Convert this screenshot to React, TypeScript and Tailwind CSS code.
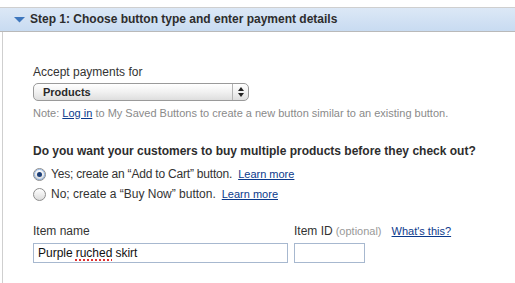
const Radio: React.FC<{ checked?: boolean }> = ({ checked }) => {
  return (
    <span className="relative flex items-center justify-center w-[13px] h-[13px] rounded-full border border-[#8d8d8d] bg-gradient-to-b from-[#ffffff] to-[#dcdcdc] shrink-0">
      {checked && (
        <span className="w-[5px] h-[5px] rounded-full bg-[#1d3f77]" />
      )}
      {checked && (
        <span className="absolute inset-0 rounded-full border border-[#5a8fd6] opacity-60" />
      )}
    </span>
  )
}

const LearnMore: React.FC = () => (
  <a className="ml-[6px] text-[11px] tracking-normal text-[#0b3a8c] underline underline-offset-1">
    Learn more
  </a>
)

export default function App() {
  return (
    <div
      className="w-[515px] h-[283px] overflow-hidden bg-white pt-[7px] text-[#333]"
      style={{ fontFamily: '"Liberation Sans", Arial, sans-serif' }}
    >
      {/* step header */}
      <div className="h-[25px] border-t border-b border-t-[#cfcfcf] border-b-[#b9b9b9] bg-gradient-to-b from-[#dce8f6] to-[#c8dbf1] flex items-center">
        <svg width="12" height="6" viewBox="0 0 12 6" className="ml-[14px] mr-[4px] mt-[1px]">
          <polygon points="0,0 11,0 5.5,5.5" fill="#3e77bd" />
        </svg>
        <span className="text-[12px] font-bold leading-[15px] text-[#2d2d2d]">
          Step 1: Choose button type and enter payment details
        </span>
      </div>

      {/* body */}
      <div className="ml-[2px] h-[260px] border-l border-[#cfcfcf] pl-[30px]">
        <div className="pt-[33px] text-[12px] leading-[15px]">
          Accept payments for
        </div>

        <div className="mt-[3px] w-[216px] h-[18px] rounded-[5px] border border-[#9a9a9a] bg-gradient-to-b from-[#ffffff] via-[#f1f1f1] to-[#dedede] flex items-center">
          <span className="flex-1 pl-[9px] text-[11px] font-bold text-[#2a2a2a] leading-[14px]">
            Products
          </span>
          <span className="h-full border-l border-[#b3b3b3] w-[16px] flex flex-col items-center justify-center gap-[1px]">
            <svg width="6" height="10" viewBox="0 0 6 10">
              <polygon points="3,0 6,4 0,4" fill="#222" />
              <polygon points="0,6 6,6 3,10" fill="#222" />
            </svg>
          </span>
        </div>

        <div className="mt-[5px] text-[11px] leading-[14px] text-[#8a8a8a]">
          Note: <a className="text-[#0b3a8c] underline underline-offset-1">Log in</a> to My
          Saved Buttons to create a new button similar to an existing button.
        </div>

        <div className="mt-[24px] text-[12px] font-bold leading-[15px] text-[#2d2d2d]">
          Do you want your customers to buy multiple products before they check out?
        </div>

        <div className="mt-[6px] h-[18px] flex items-center text-[12px]">
          <Radio checked />
          <span className="ml-[5px] tracking-[-0.2px]">Yes; create an “Add to Cart” button.</span>
          <LearnMore />
        </div>
        <div className="mt-[2px] h-[18px] flex items-center text-[12px]">
          <Radio />
          <span className="ml-[5px]">No; create a “Buy Now” button.</span>
          <LearnMore />
        </div>

        <div className="mt-[21px] flex gap-[6px] text-[12px] leading-[15px]">
          <div className="w-[255px]">Item name</div>
          <div className="flex items-baseline">
            <span>Item ID</span>
            <span className="ml-[3px] text-[11px] text-[#999]">(optional)</span>
            <a className="ml-[10px] text-[11px] text-[#0b3a8c] underline underline-offset-1">
              What's this?
            </a>
          </div>
        </div>

        <div className="mt-[4px] flex gap-[6px]">
          <div className="w-[255px] h-[20px] border border-[#a7b8cf] flex items-center pl-[4px] text-[12px] text-[#111]">
            Purple{' '}
            <span className="mx-[3px] underline decoration-dotted decoration-[#e03030] decoration-2 underline-offset-2">
              ruched
            </span>
            skirt
          </div>
          <div className="w-[71px] h-[20px] border border-[#a7b8cf]" />
        </div>
      </div>
    </div>
  )
}
